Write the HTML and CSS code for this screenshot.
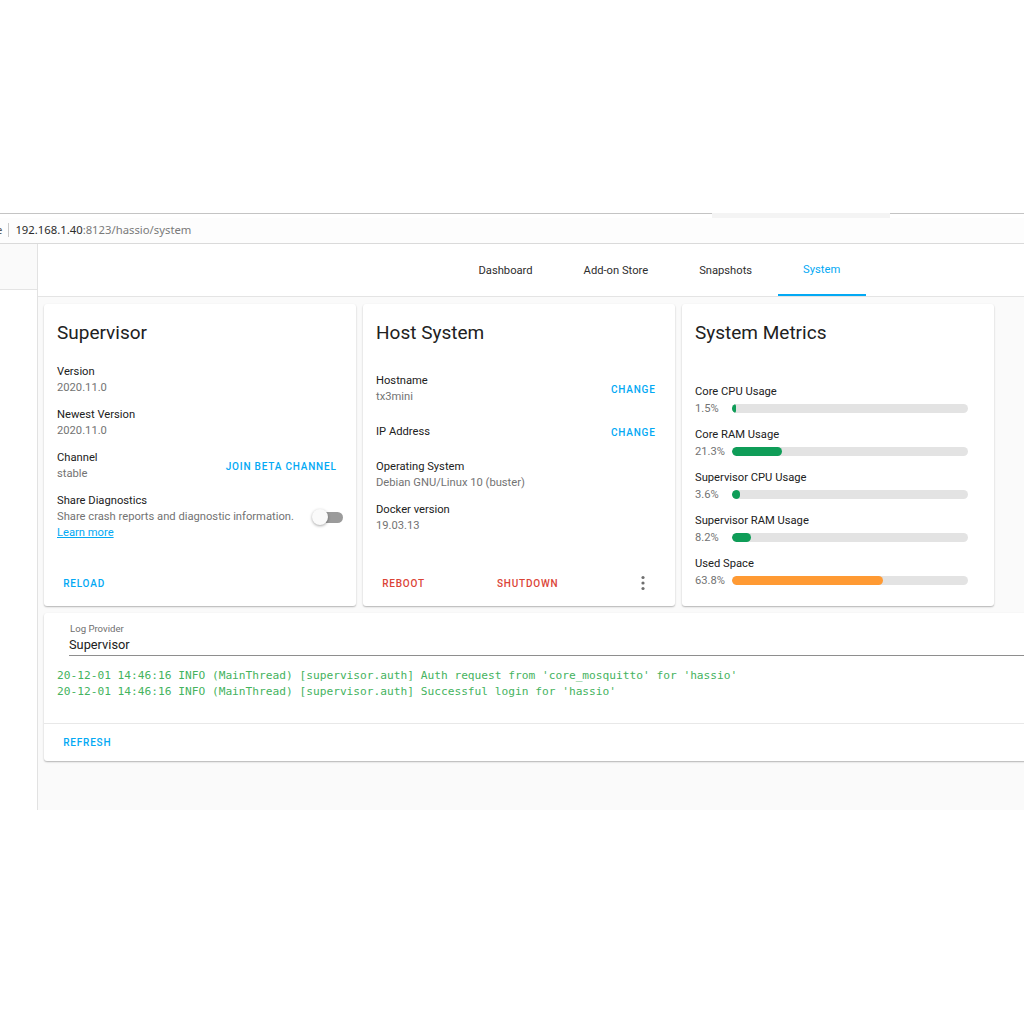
FILE: index.html
```html
<!DOCTYPE html>
<html lang="en">
<head>
<meta charset="utf-8">
<title>Supervisor - System</title>
<link rel="stylesheet" href="styles.css">
</head>
<body>
<div class="top-blank"></div>
<div class="chrome">
  <div class="tabstrip">
    <div class="seg seg-line seg-left"></div>
    <div class="seg seg-tab"></div>
    <div class="seg seg-line seg-right"></div>
  </div>
  <div class="urlbar">
    <span class="url-cut">e</span>
    <span class="url-sep"></span>
    <span class="url-host">192.168.1.40</span><span class="url-rest">:8123/hassio/system</span>
  </div>
</div>
<div class="app">
  <aside class="sidebar"><div class="sidebar-top"></div></aside>
  <main class="main">
    <header class="toolbar">
      <nav class="tabs">
        <div class="tab">Dashboard</div>
        <div class="tab">Add-on Store</div>
        <div class="tab">Snapshots</div>
        <div class="tab active">System</div>
      </nav>
    </header>
    <div class="content">
      <div class="cards">
        <section class="card">
          <h1 class="card-title">Supervisor</h1>
          <div class="card-body body-sup">
            <div class="row"><div class="row-text"><div class="label">Version</div><div class="value">2020.11.0</div></div></div>
            <div class="row"><div class="row-text"><div class="label">Newest Version</div><div class="value">2020.11.0</div></div></div>
            <div class="row"><div class="row-text"><div class="label">Channel</div><div class="value">stable</div></div><span class="btn blue">Join beta channel</span></div>
            <div class="row"><div class="row-text"><div class="label">Share Diagnostics</div><div class="value">Share crash reports and diagnostic information.</div><div class="value"><span class="link">Learn more</span></div></div>
              <div class="switch"><span class="switch-track"></span><span class="switch-thumb"></span></div>
            </div>
          </div>
          <div class="card-actions"><span class="btn blue">Reload</span></div>
        </section>
        <section class="card">
          <h1 class="card-title">Host System</h1>
          <div class="card-body body-host">
            <div class="row"><div class="row-text"><div class="label">Hostname</div><div class="value">tx3mini</div></div><span class="btn blue">Change</span></div>
            <div class="row"><div class="row-text"><div class="label">IP Address</div></div><span class="btn blue">Change</span></div>
            <div class="row"><div class="row-text"><div class="label">Operating System</div><div class="value">Debian GNU/Linux 10 (buster)</div></div></div>
            <div class="row"><div class="row-text"><div class="label">Docker version</div><div class="value">19.03.13</div></div></div>
          </div>
          <div class="card-actions spread">
            <span class="btn red">Reboot</span>
            <span class="btn red">Shutdown</span>
            <span class="icon-btn"><svg width="4" height="16" viewBox="0 0 4 16"><circle cx="2" cy="2.5" r="1.6"/><circle cx="2" cy="8" r="1.6"/><circle cx="2" cy="13.5" r="1.6"/></svg></span>
          </div>
        </section>
        <section class="card">
          <h1 class="card-title">System Metrics</h1>
          <div class="card-body body-metrics">
            <div class="metric"><div class="label">Core CPU Usage</div><div class="metric-line"><span class="pct">1.5%</span><div class="bar"><div class="fill green" style="width:1.5%"></div></div></div></div>
            <div class="metric"><div class="label">Core RAM Usage</div><div class="metric-line"><span class="pct">21.3%</span><div class="bar"><div class="fill green" style="width:21.3%"></div></div></div></div>
            <div class="metric"><div class="label">Supervisor CPU Usage</div><div class="metric-line"><span class="pct">3.6%</span><div class="bar"><div class="fill green" style="width:3.6%"></div></div></div></div>
            <div class="metric"><div class="label">Supervisor RAM Usage</div><div class="metric-line"><span class="pct">8.2%</span><div class="bar"><div class="fill green" style="width:8.2%"></div></div></div></div>
            <div class="metric"><div class="label">Used Space</div><div class="metric-line"><span class="pct">63.8%</span><div class="bar"><div class="fill orange" style="width:63.8%"></div></div></div></div>
          </div>
        </section>
      </div>
      <section class="card log-card">
        <div class="select">
          <div class="select-label">Log Provider</div>
          <div class="select-value">Supervisor</div>
        </div>
        <pre class="log">20-12-01 14:46:16 INFO (MainThread) [supervisor.auth] Auth request from 'core_mosquitto' for 'hassio'
20-12-01 14:46:16 INFO (MainThread) [supervisor.auth] Successful login for 'hassio'</pre>
        <div class="log-actions"><span class="btn blue">Refresh</span></div>
      </section>
    </div>
  </main>
</div>
</body>
</html>
```
FILE: styles.css
```css
html, body {
  margin: 0;
  padding: 0;
  background: #ffffff;
  overflow: hidden;
}
body {
  font-family: Roboto, "Noto Sans", sans-serif;
  width: 1024px;
  height: 1024px;
}
.top-blank { height: 213px; }

/* browser chrome */
.tabstrip {
  display: flex;
  height: 5px;
}
.seg-line { border-top: 1px solid #c4c4c4; }
.seg-left { width: 712px; }
.seg-tab { width: 178px; background: #f4f4f4; }
.seg-right { flex: 1; }
.urlbar {
  height: 26px;
  display: flex;
  align-items: center;
  padding-bottom: 2px;
  box-sizing: border-box;
  background: #fdfdfd;
  border-bottom: 1px solid #dadada;
  font-family: "Noto Sans", "Open Sans", sans-serif;
  font-size: 11.3px;
}
.url-cut { margin-left: -4px; color: #555; }
.url-sep {
  width: 1px;
  height: 14px;
  background: #c9c9c9;
  margin: 0 6px 0 6px;
}
.url-host { color: #2b2b2b; }
.url-rest { color: #7a7a7a; }

/* app */
.app {
  display: flex;
  height: 566px;
}
.sidebar {
  width: 37px;
  border-right: 1px solid #e2e2e2;
  background: #ffffff;
}
.sidebar-top {
  height: 45px;
  background: #fafafa;
  border-bottom: 1px solid #e4e4e4;
}
.main {
  flex: 1;
  min-width: 0;
  display: flex;
  flex-direction: column;
  overflow: hidden;
  background: #fafafa;
}
.toolbar {
  height: 52px;
  background: #ffffff;
  border-bottom: 1px solid #e4e4e4;
  display: flex;
}
.tabs {
  display: flex;
  padding-left: 415px;
}
.tab {
  padding: 0 25.5px;
  display: flex;
  align-items: center;
  font-size: 11.2px;
  color: #2e2e2e;
  box-sizing: border-box;
  height: 52px;
}
.tab.active {
  color: #03a9f4;
  border-bottom: 2px solid #03a9f4;
  padding-top: 1px;
}

.content {
  padding: 7px 0 0 6px;
}
.cards {
  display: flex;
  gap: 7px;
}
.card {
  background: #ffffff;
  border-radius: 3px;
  box-shadow: 0 1px 2px rgba(0,0,0,0.22), 0 1px 1px rgba(0,0,0,0.08);
}
.cards .card {
  width: 312px;
  height: 302px;
  display: flex;
  flex-direction: column;
}
.card-title {
  margin: 0;
  padding: 17px 13px 0;
  font-size: 19px;
  line-height: 24px;
  font-weight: 400;
  color: #212121;
}
.card-body { padding: 0 13px; }
.body-sup { padding-top: 13.5px; }
.body-host { padding-top: 22.5px; }
.body-metrics { padding-top: 33.5px; }

.row {
  display: flex;
  align-items: center;
  justify-content: space-between;
  min-height: 43px;
  box-sizing: border-box;
  padding: 5.5px 0;
}
.row-text { flex: 1; }
.label {
  font-size: 11.2px;
  line-height: 16px;
  color: #212121;
}
.value {
  font-size: 11.2px;
  line-height: 16px;
  color: #737373;
}
.link {
  color: #03a9f4;
  text-decoration: underline;
}

.btn {
  font-size: 10px;
  font-weight: 500;
  letter-spacing: 0.8px;
  text-transform: uppercase;
  padding: 0 6.4px;
  line-height: 29px;
  height: 29px;
  display: inline-block;
}
.btn.blue { color: #03a9f4; }
.btn.red { color: #db4437; }

.switch {
  position: relative;
  width: 29px;
  height: 16px;
  margin-left: 12px;
}
.switch-track {
  position: absolute;
  left: 1px;
  top: 2.5px;
  width: 28px;
  height: 11px;
  border-radius: 6px;
  background: #9b9b9b;
}
.switch-thumb {
  position: absolute;
  left: -2px;
  top: 0;
  width: 16px;
  height: 16px;
  border-radius: 50%;
  background: #fafafa;
  box-shadow: 0 1px 3px rgba(0,0,0,0.35);
}

.card-actions {
  margin-top: auto;
  height: 46px;
  padding: 0 12.8px;
  display: flex;
  align-items: center;
  box-sizing: border-box;
}
.card-actions.spread { justify-content: space-between; }
.icon-btn {
  width: 38px;
  height: 38px;
  display: flex;
  align-items: center;
  justify-content: center;
  fill: #6f6f6f;
}

.metric {
  height: 43px;
  padding-top: 5.5px;
  box-sizing: border-box;
}
.metric-line {
  display: flex;
  align-items: center;
  height: 16px;
}
.pct {
  width: 37px;
  font-size: 11.2px;
  color: #737373;
}
.bar {
  flex: 1;
  height: 9px;
  margin-right: 13px;
  border-radius: 4.5px;
  background: #e3e3e3;
  overflow: hidden;
}
.fill {
  height: 100%;
  border-radius: 4.5px;
}
.fill.green { background: #0f9d58; }
.fill.orange { background: #ff9a33; }

/* log card */
.log-card {
  margin-top: 7px;
  margin-right: -20px;
  height: 148px;
  display: flex;
  flex-direction: column;
  border-radius: 3px 0 0 3px;
}
.select {
  margin-left: 25px;
  padding-top: 10px;
  padding-bottom: 2px;
  border-bottom: 1px solid #8e8e8e;
}
.select-label {
  font-size: 9.6px;
  line-height: 12px;
  color: #6f6f6f;
  padding-left: 1px;
}
.select-value {
  margin-top: 2px;
  font-size: 12.8px;
  line-height: 16px;
  color: #212121;
}
.log {
  margin: 0;
  padding: 12px 13px 23px;
  font-family: "DejaVu Sans Mono", "Liberation Mono", monospace;
  font-size: 11.2px;
  line-height: 16px;
  color: #45b35e;
  border-bottom: 1px solid #e8e8e8;
}
.log-actions {
  height: 37px;
  padding: 0 12.8px;
  display: flex;
  align-items: center;
}
```
